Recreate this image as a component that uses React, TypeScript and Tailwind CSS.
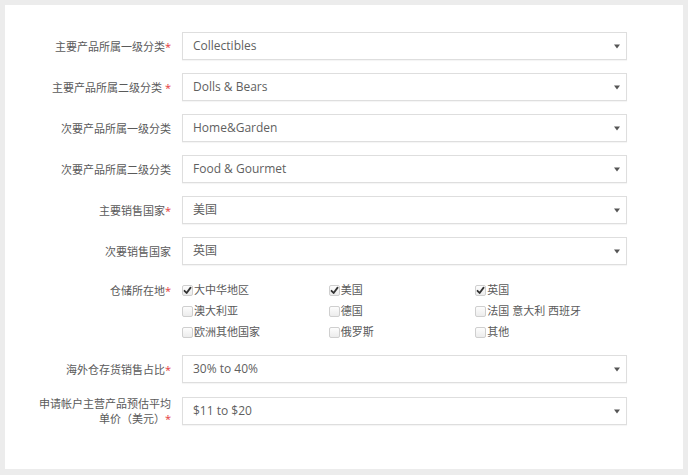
import React from "react";

const font = { fontFamily: '"Open Sans", "Noto Sans CJK SC", sans-serif' };

function Label({ children, req }: { children: React.ReactNode; req?: boolean }) {
  return (
    <div className="w-[166px] shrink-0 text-right text-[11px] leading-[15px] text-[#5a5a5a]">
      {children}
      {req && <span className="text-[#e4393c]">*</span>}
    </div>
  );
}

function Select({ value }: { value: string }) {
  return (
    <div className="flex h-[28px] w-[445px] items-center justify-between border border-[#dedede] bg-white pl-[10px] pr-[6px] text-[12px] text-[#5f5f5f] shadow-[0_1px_1px_rgba(0,0,0,0.04)]">
      <span>{value}</span>
      <svg width="6" height="5" viewBox="0 0 6 5">
        <path d="M0 0.5 L6 0.5 L3 4.5 Z" fill="#555" />
      </svg>
    </div>
  );
}

function Box({ checked }: { checked?: boolean }) {
  return (
    <span className="mr-[1px] flex h-[11px] w-[11px] shrink-0 items-center justify-center rounded-[2px] border border-[#cfcfcf] bg-gradient-to-b from-[#fdfdfd] to-[#ececec]">
      {checked && (
        <svg width="9" height="9" viewBox="0 0 9 9">
          <path d="M1.5 4.8 L3.6 7 L7.6 1.6" stroke="#333" strokeWidth="1.8" fill="none" strokeLinecap="round" strokeLinejoin="round" />
        </svg>
      )}
    </span>
  );
}

function Check({ label, checked }: { label: string; checked?: boolean }) {
  return (
    <div className="flex h-[21px] w-[146px] items-center text-[11px] text-[#5a5a5a]">
      <Box checked={checked} />
      <span>{label}</span>
    </div>
  );
}

function Row({ label, req, value }: { label: React.ReactNode; req?: boolean; value: string }) {
  return (
    <div className="flex items-center gap-[11px]">
      <Label req={req}>{label}</Label>
      <Select value={value} />
    </div>
  );
}

export default function App() {
  return (
    <div className="min-h-[475px] w-[688px] bg-[#ececec] p-[5px]" style={font}>
      <div className="flex h-[464px] w-[678px] flex-col gap-[13px] bg-white pt-[27px]">
        <Row label="主要产品所属一级分类" req value="Collectibles" />
        <Row label="主要产品所属二级分类 " req value="Dolls & Bears" />
        <Row label="次要产品所属一级分类" value="Home&Garden" />
        <Row label="次要产品所属二级分类" value="Food & Gourmet" />
        <Row label="主要销售国家" req value="美国" />
        <Row label="次要销售国家" value="英国" />
        <div className="mt-[2px] mb-[-1px] flex gap-[11px]">
          <div className="flex h-[21px] items-center">
            <Label req>仓储所在地</Label>
          </div>
          <div className="grid w-[440px] grid-cols-3">
            <Check label="大中华地区" checked />
            <Check label="美国" checked />
            <Check label="英国" checked />
            <Check label="澳大利亚" />
            <Check label="德国" />
            <Check label="法国 意大利 西班牙" />
            <Check label="欧洲其他国家" />
            <Check label="俄罗斯" />
            <Check label="其他" />
          </div>
        </div>
        <Row label="海外仓存货销售占比" req value="30% to 40%" />
        <Row
          label={
            <>
              申请帐户主营产品预估平均
              <br />
              单价（美元）
            </>
          }
          req
          value="$11 to $20"
        />
      </div>
    </div>
  );
}
